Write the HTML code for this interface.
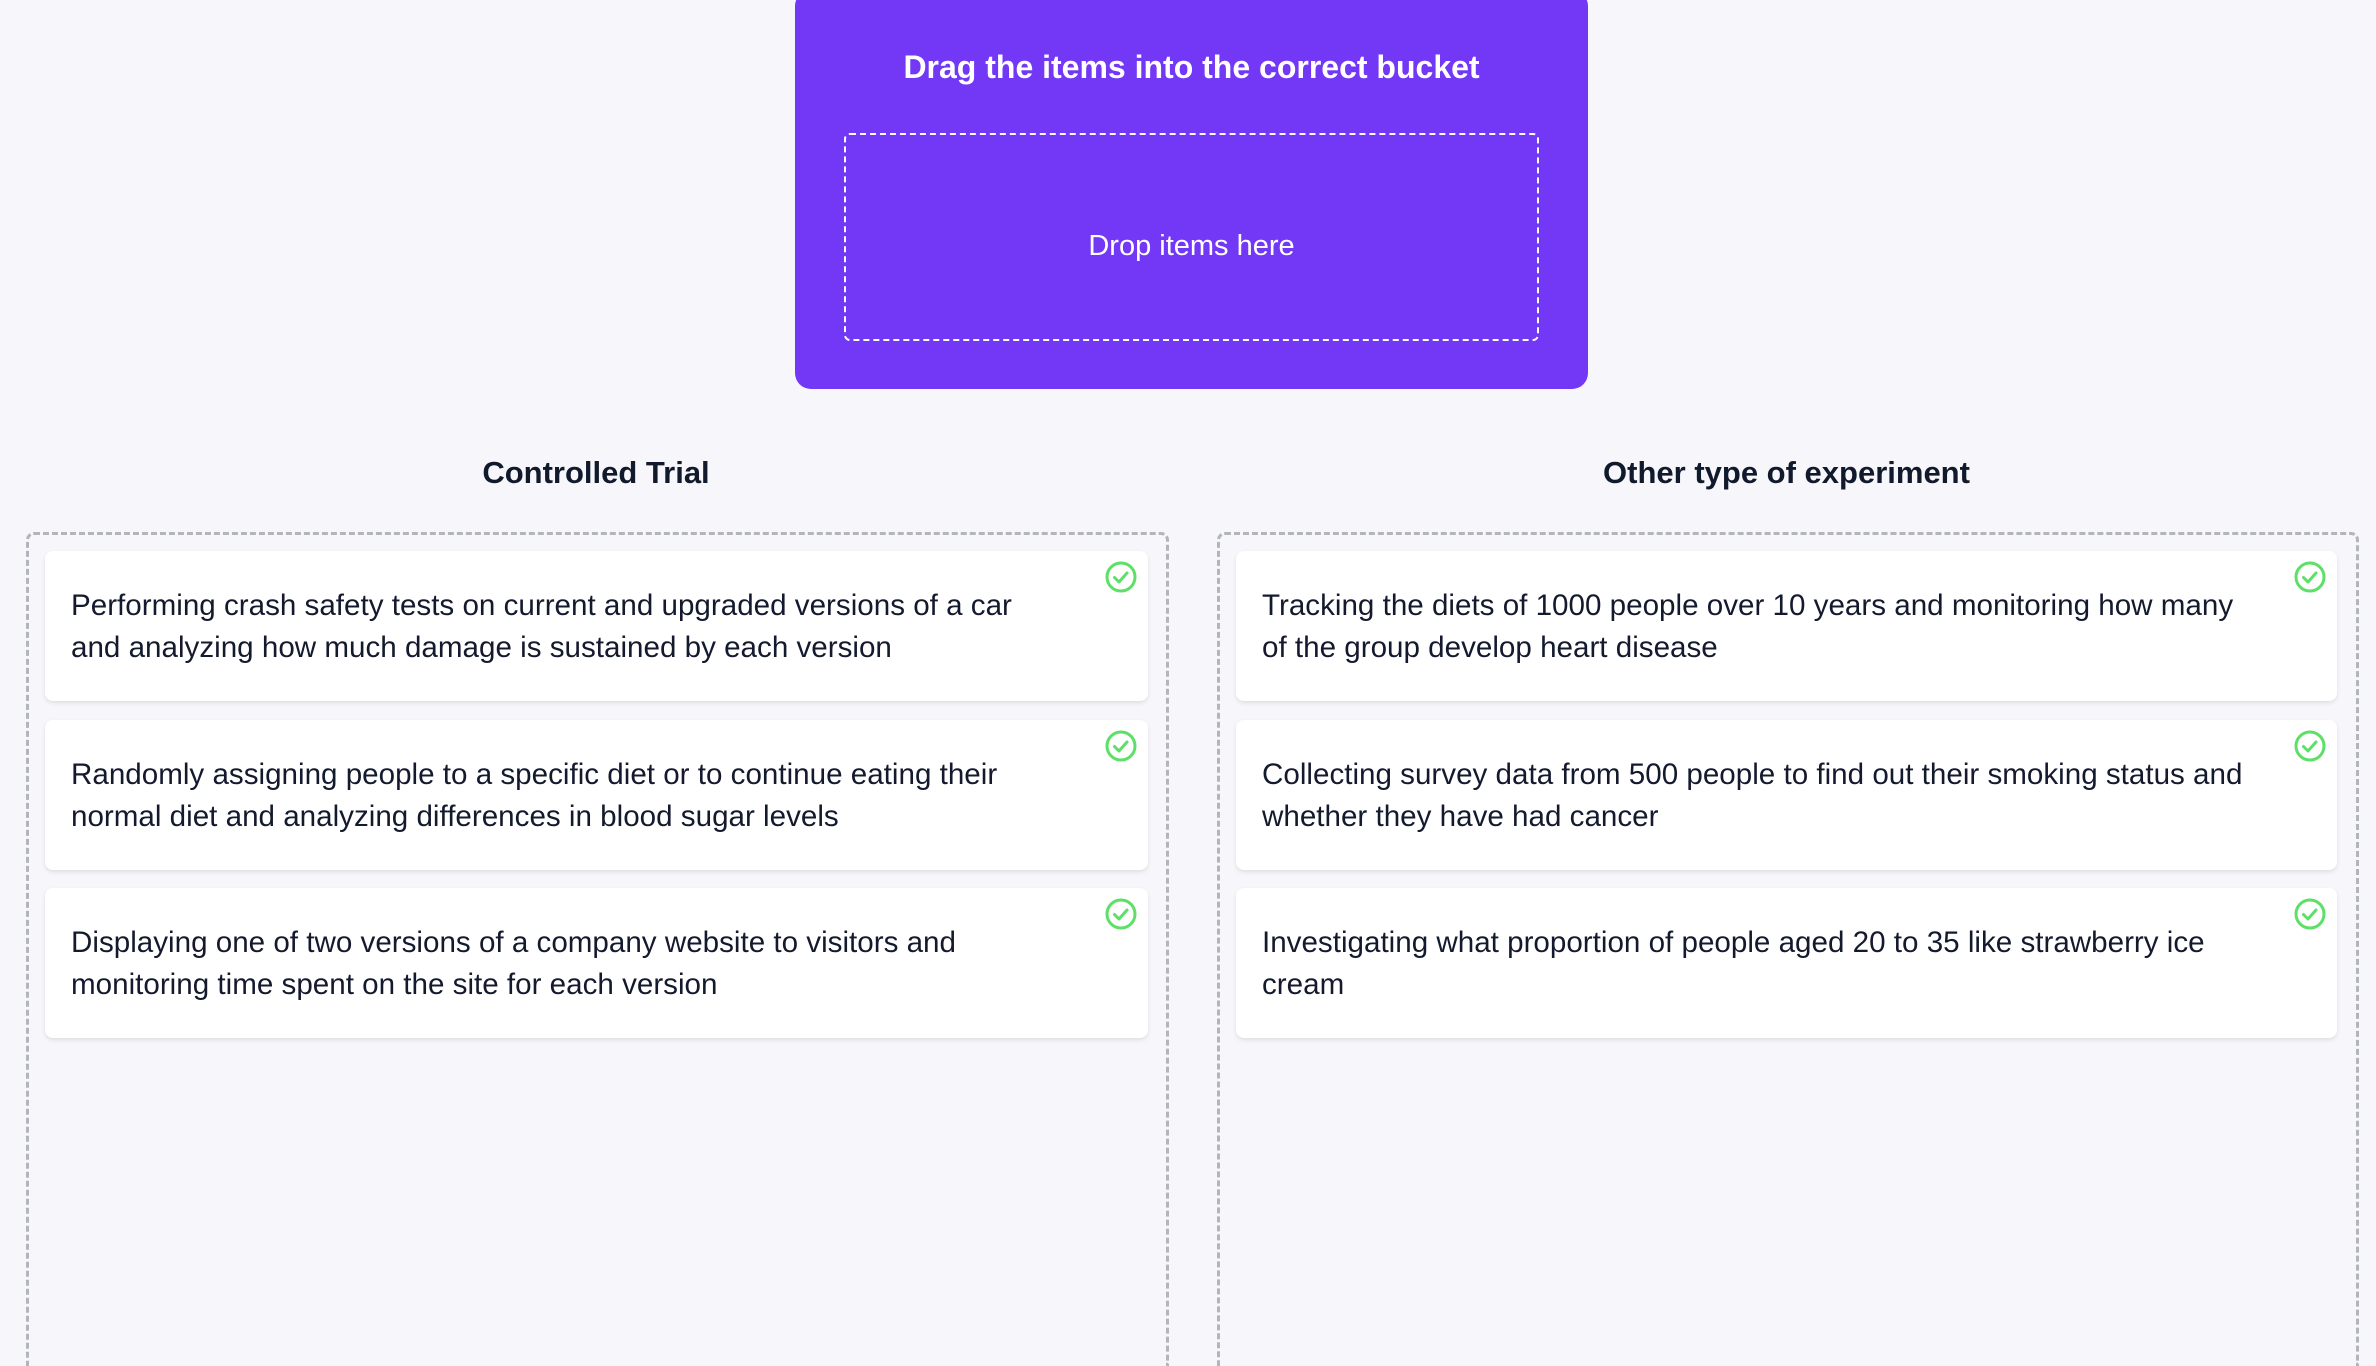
<!DOCTYPE html>
<html style="height:1366px;overflow:hidden"><head><meta charset="utf-8"><style>
body{margin:0;width:2376px;height:1366px;background:#f7f7fb;font-family:"Liberation Sans",sans-serif;position:relative;overflow:hidden;color:#141a2e}
.top{position:absolute;left:795px;top:-10px;width:793px;height:399px;background:#7337f6;border-radius:16px}
.title{position:absolute;left:795px;width:793px;top:49px;text-align:center;color:#fff;font-size:32px;font-weight:bold}
.drop{position:absolute;left:844px;top:133px;width:695px;border:2px dashed #fff;border-radius:6px;color:#fff;font-size:29px;display:flex;align-items:center;justify-content:center;padding-top:18px;box-sizing:border-box;height:208px}
.h{position:absolute;top:455px;font-size:31px;font-weight:bold;text-align:center;color:#111a2c}
.bucket{position:absolute;top:532px;height:831px;border:3px dashed #b2b5be;border-bottom:none;border-radius:8px 8px 0 0}
.card{position:absolute;height:150px;background:#fff;border-radius:8px;box-shadow:0 2px 4px rgba(0,0,0,.1);font-size:29.6px;line-height:42px;box-sizing:border-box;padding:34px 26px;white-space:nowrap}
.card svg{position:absolute;right:10px;top:9px}
</style></head><body>
<div class="top"></div>
<div class="title">Drag the items into the correct bucket</div>
<div class="drop">Drop items here</div>
<div class="h" style="left:26px;width:1140px">Controlled Trial</div>
<div class="h" style="left:1217px;width:1139px">Other type of experiment</div>
<div class="bucket" style="left:26px;width:1137px"></div>
<div class="bucket" style="left:1217px;width:1136px"></div>

<div class="card" style="left:45px;top:551px;width:1103px">Performing crash safety tests on current and upgraded versions of a car<br>and analyzing how much damage is sustained by each version<svg width="34" height="34" viewBox="0 0 34 34"><circle cx="17" cy="17" r="14" fill="none" stroke="#5ddf68" stroke-width="3"/><path d="M10.5 17.5l4.5 4.5 8-9" fill="none" stroke="#5ddf68" stroke-width="3" stroke-linecap="round" stroke-linejoin="round"/></svg></div>
<div class="card" style="left:45px;top:720px;width:1103px">Randomly assigning people to a specific diet or to continue eating their<br>normal diet and analyzing differences in blood sugar levels<svg width="34" height="34" viewBox="0 0 34 34"><circle cx="17" cy="17" r="14" fill="none" stroke="#5ddf68" stroke-width="3"/><path d="M10.5 17.5l4.5 4.5 8-9" fill="none" stroke="#5ddf68" stroke-width="3" stroke-linecap="round" stroke-linejoin="round"/></svg></div>
<div class="card" style="left:45px;top:888px;width:1103px">Displaying one of two versions of a company website to visitors and<br>monitoring time spent on the site for each version<svg width="34" height="34" viewBox="0 0 34 34"><circle cx="17" cy="17" r="14" fill="none" stroke="#5ddf68" stroke-width="3"/><path d="M10.5 17.5l4.5 4.5 8-9" fill="none" stroke="#5ddf68" stroke-width="3" stroke-linecap="round" stroke-linejoin="round"/></svg></div>

<div class="card" style="left:1236px;top:551px;width:1101px">Tracking the diets of 1000 people over 10 years and monitoring how many<br>of the group develop heart disease<svg width="34" height="34" viewBox="0 0 34 34"><circle cx="17" cy="17" r="14" fill="none" stroke="#5ddf68" stroke-width="3"/><path d="M10.5 17.5l4.5 4.5 8-9" fill="none" stroke="#5ddf68" stroke-width="3" stroke-linecap="round" stroke-linejoin="round"/></svg></div>
<div class="card" style="left:1236px;top:720px;width:1101px">Collecting survey data from 500 people to find out their smoking status and<br>whether they have had cancer<svg width="34" height="34" viewBox="0 0 34 34"><circle cx="17" cy="17" r="14" fill="none" stroke="#5ddf68" stroke-width="3"/><path d="M10.5 17.5l4.5 4.5 8-9" fill="none" stroke="#5ddf68" stroke-width="3" stroke-linecap="round" stroke-linejoin="round"/></svg></div>
<div class="card" style="left:1236px;top:888px;width:1101px">Investigating what proportion of people aged 20 to 35 like strawberry ice<br>cream<svg width="34" height="34" viewBox="0 0 34 34"><circle cx="17" cy="17" r="14" fill="none" stroke="#5ddf68" stroke-width="3"/><path d="M10.5 17.5l4.5 4.5 8-9" fill="none" stroke="#5ddf68" stroke-width="3" stroke-linecap="round" stroke-linejoin="round"/></svg></div>
</body></html>
